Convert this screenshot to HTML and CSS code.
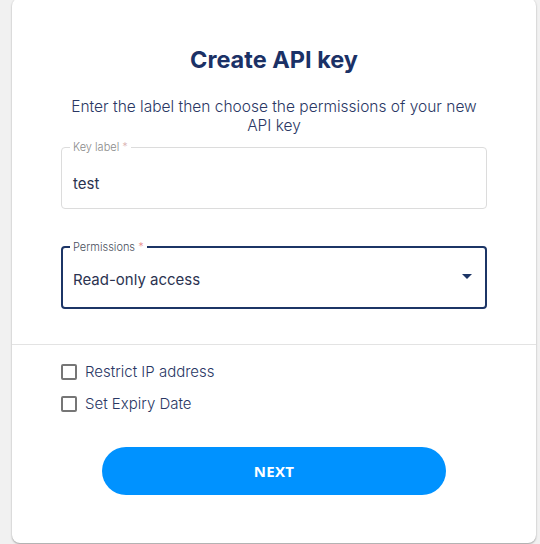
FILE: index.html
```html
<!DOCTYPE html>
<html>
<head>
<meta charset="utf-8">
<link rel="stylesheet" href="styles.css">
</head>
<body>
<div class="card">
  <div class="top">
    <h1 class="title">Create API key</h1>
    <p class="desc">Enter the label then choose the permissions of your new API key</p>
    <fieldset class="field">
      <legend class="legend">Key label <span class="req light">*</span></legend>
      <div class="value">test</div>
    </fieldset>
    <fieldset class="field focus">
      <legend class="legend dark">Permissions <span class="req">*</span></legend>
      <div class="value row"><span>Read-only access</span>
        <svg class="arrow" width="10" height="5" viewBox="0 0 10 5"><path d="M0 0H10L5 5Z" fill="#1c3566"/></svg>
      </div>
    </fieldset>
  </div>
  <div class="bottom">
    <label class="check"><span class="box"></span>Restrict IP address</label>
    <label class="check"><span class="box"></span>Set Expiry Date</label>
    <button class="btn">NEXT</button>
  </div>
</div>
</body>
</html>
```
FILE: styles.css
```css
html, body { margin: 0; padding: 0; }
body {
  background: #f1f1f1;
  font-family: "Inter", "Open Sans", sans-serif;
  width: 540px;
  height: 544px;
  overflow: hidden;
}
.card {
  margin: -2px 0 0 12px;
  width: 524px;
  height: 545px;
  background: #fff;
  border-radius: 8px;
  box-shadow: 0 1px 2px rgba(0,0,0,0.35);
  box-sizing: border-box;
}
.top {
  padding: 48px 49px 0 49px;
  border-bottom: 1px solid #e3e3e3;
  height: 347px;
  box-sizing: border-box;
}
.title {
  margin: 0;
  text-align: center;
  font-size: 23.5px;
  font-weight: 700;
  color: #1b3166;
  line-height: 28px;
}
.desc {
  margin: 23px 0 0;
  text-align: center;
  font-size: 15.5px;
  font-weight: 300;
  line-height: 19px;
  color: #2a3764;
}
.field {
  margin: 6px 0 0;
  border: 1px solid #dcdcdc;
  border-radius: 4px;
  padding: 0 11px;
  height: 68px;
  box-sizing: border-box;
}
.field + .field { margin-top: 32px; border: 2px solid #1c3566; padding: 0 10px; }
.legend {
  font-size: 11px;
  line-height: 12px;
  font-weight: 300;
  color: #8a8a8a;
  padding: 0 3px;
  margin-left: -3px;
}
.legend.dark { color: #4a4f5c; }
.req { color: #e88a8a; }
.req.light { color: #d9b0b0; }
.value {
  margin-top: 21px;
  font-size: 15px;
  line-height: 20px;
  color: #2b3350;
}
.focus .value { margin-top: 17px; }
.row { display: flex; justify-content: space-between; align-items: center; }
.arrow { margin-right: 3px; margin-top: -8px; }
.bottom {
  padding: 19px 49px 0;
  display: flex;
  flex-direction: column;
}
.check {
  display: flex;
  align-items: center;
  gap: 8px;
  font-size: 15px;
  font-weight: 300;
  line-height: 16px;
  color: #2a3764;
  height: 16px;
  margin-bottom: 16px;
}
.box {
  width: 12px;
  height: 12px;
  border: 2px solid #767676;
  border-radius: 2px;
  flex: none;
}
.btn {
  align-self: center;
  margin-top: 19px;
  width: 344px;
  height: 48px;
  border: none;
  border-radius: 24px;
  background: #0092ff;
  color: #fff;
  font-family: "Open Sans", sans-serif;
  font-weight: 700;
  font-size: 15px;
  letter-spacing: 0.3px;
}
```
